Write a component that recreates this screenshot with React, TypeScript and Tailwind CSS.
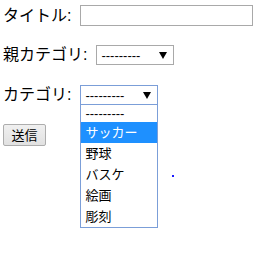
const font = { fontFamily: '"Liberation Sans", "Noto Sans CJK JP", sans-serif' };

const options = ["サッカー", "野球", "バスケ", "絵画", "彫刻"];

function Arrow() {
  return (
    <svg width="8" height="7" viewBox="0 0 8 7" className="shrink-0">
      <path d="M0 0 H8 L4 7 Z" fill="#000" />
    </svg>
  );
}

function FakeSelect({ focused }: { focused?: boolean }) {
  return (
    <div
      className={`flex h-[20px] w-[78px] items-center justify-between border bg-white pl-[4px] pr-[6px] text-[13px] text-black ${
        focused ? "border-[#7b9ed8]" : "border-[#a9a9a9]"
      }`}
    >
      <span className="leading-none">---------</span>
      <Arrow />
    </div>
  );
}

export default function App() {
  return (
    <div className="relative h-[254px] w-[269px] overflow-hidden bg-white pl-[3px] pt-[5px] text-black" style={font}>
      <div className="flex h-[21px] items-center">
        <span className="text-[16px] leading-none">タイトル:</span>
        <div className="ml-[9px] h-[21px] w-[173px] border border-[#a9a9a9] bg-white" />
      </div>

      <div className="mt-[19px] flex h-[20px] items-center">
        <span className="text-[16px] leading-none">親カテゴリ:</span>
        <div className="ml-[9px]">
          <FakeSelect />
        </div>
      </div>

      <div className="mt-[20px] flex h-[20px] items-center">
        <span className="text-[16px] leading-none">カテゴリ:</span>
        <div className="relative ml-[9px]">
          <FakeSelect focused />
          <div className="absolute left-0 top-[20px] z-10 w-[78px] border-x border-b border-[#7b9ed8] bg-white text-[13px]">
            <div className="flex h-[17px] items-center pl-[4px] leading-none">---------</div>
            {options.map((o, i) => (
              <div
                key={o}
                className={`flex h-[21px] items-center pl-[4px] leading-none ${
                  i === 0 ? "bg-[#1e90ff] text-white" : "text-black"
                }`}
              >
                {o}
              </div>
            ))}
          </div>
        </div>
      </div>

      <button className="mt-[19px] flex h-[22px] w-[43px] items-center justify-center rounded-[2px] border border-[#adadad] bg-gradient-to-b from-[#f0f0f0] to-[#e1e1e1] text-[13px] leading-none">
        送信
      </button>

      <div className="absolute left-[172px] top-[175px] h-[2px] w-[2px] bg-[#1a1aff]" />
    </div>
  );
}
